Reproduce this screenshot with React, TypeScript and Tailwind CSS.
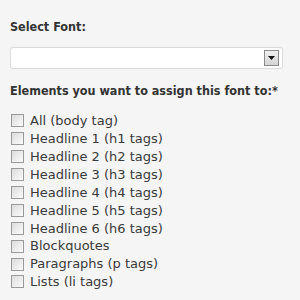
const items = [
  "All (body tag)",
  "Headline 1 (h1 tags)",
  "Headline 2 (h2 tags)",
  "Headline 3 (h3 tags)",
  "Headline 4 (h4 tags)",
  "Headline 5 (h5 tags)",
  "Headline 6 (h6 tags)",
  "Blockquotes",
  "Paragraphs (p tags)",
  "Lists (li tags)",
];

function Box() {
  return (
    <span className="block h-[13px] w-[13px] shrink-0 border border-[#9a9a9a] bg-gradient-to-br from-[#dcdcdc] to-[#fbfbfb]" />
  );
}

export default function App() {
  return (
    <div className="h-[300px] w-[300px] overflow-hidden bg-[#f5f5f5] px-[10px] pt-[19px] font-['DejaVu_Sans',Verdana,sans-serif] text-[#333]">
      <p className="font-['DejaVu_Sans_Condensed','DejaVu_Sans',sans-serif] text-[12.5px] font-bold leading-[16px]">Select Font:</p>

      <div className="mt-[12px] flex h-[22px] w-[273px] items-center justify-end rounded-[3px] border border-[#dcdcdc] bg-white pr-[3px] shadow-[0_0_2px_rgba(0,0,0,0.06)]">
        <span className="flex h-[16px] w-[15px] items-center justify-center border border-[#8a8a8a] bg-gradient-to-b from-[#f0f0f0] to-[#d4d4d4]">
          <svg width="7" height="4" viewBox="0 0 7 4">
            <path d="M0 0h7L3.5 4z" fill="#111" />
          </svg>
        </span>
      </div>

      <p className="mt-[14px] whitespace-nowrap font-['DejaVu_Sans_Condensed','DejaVu_Sans',sans-serif] text-[12.5px] font-bold leading-[16px]">
        Elements you want to assign this font to:*
      </p>

      <ul className="mt-[13px] flex flex-col">
        {items.map((label) => (
          <li key={label} className="flex h-[17.9px] items-center gap-[6px] pl-[1px] text-[13px] text-[#3a3a3a]">
            <Box />
            <span>{label}</span>
          </li>
        ))}
      </ul>
    </div>
  );
}
